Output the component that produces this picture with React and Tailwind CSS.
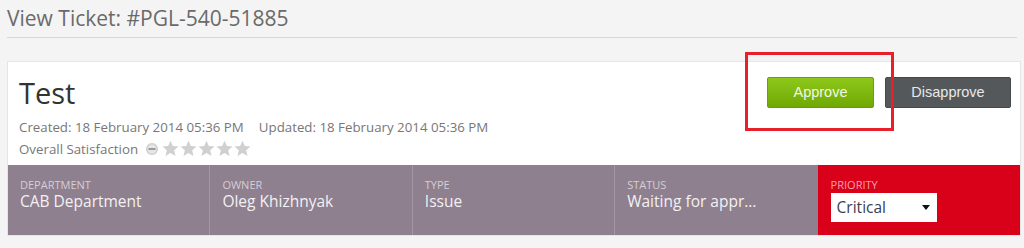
import React from 'react';

const Star = () => (
    <svg width="19" height="18" viewBox="0 0 24 24" className="-mr-[1px]">
        <path d="M12 1l3.1 7 7.6.7-5.8 5 1.8 7.5L12 17.3l-6.7 3.9 1.8-7.5-5.8-5 7.6-.7z" fill="#d0d0d0" />
    </svg>
);

const Cell = ({ label, value, last }) => (
    <div className={`px-[12px] pt-[13px] ${last ? '' : 'border-r border-[#a396a3]'}`}>
        <div className="text-[11px] leading-[13px] uppercase text-[#d6ced6]">{label}</div>
        <div className="text-[15.5px] leading-[20px] text-[#f4f0f4] whitespace-nowrap">{value}</div>
    </div>
);

const App = () => {
    return (
        <div className="w-[1024px] h-[248px] bg-[#f4f4f4] overflow-hidden font-['Open_Sans',sans-serif]">
            {/* Header */}
            <div className="px-[7px] pt-[5px]">
                <h1 className="text-[21px] leading-[27px] text-[#6a6a6a]">View Ticket: #PGL-540-51885</h1>
                <div className="mt-[5px] border-t border-[#d8d8d8]" />
            </div>

            {/* Ticket card */}
            <div className="relative ml-[7px] mt-[23px] w-[1014px] bg-white border border-[#e6e6e6]">
                <div className="flex justify-between h-[103px]">
                    <div className="pl-[11px] pt-[13px]">
                        <div className="text-[29px] leading-[36px] text-[#333]">Test</div>
                        <div className="mt-[7px] text-[13.3px] leading-[18px] text-[#777] flex gap-[15px]">
                            <span>Created: 18 February 2014 05:36 PM</span>
                            <span>Updated: 18 February 2014 05:36 PM</span>
                        </div>
                        <div className="mt-[4px] flex items-center text-[13.3px] leading-[18px] text-[#777]">
                            <span>Overall Satisfaction</span>
                            <svg width="14" height="14" viewBox="0 0 14 14" className="ml-[7px] mr-[2px]">
                                <circle cx="7" cy="7" r="6" fill="#cfcfcf" />
                                <circle cx="7" cy="7" r="4.5" fill="#e6e6e6" />
                                <rect x="3.5" y="6" width="7" height="2" fill="#9a9a9a" />
                            </svg>
                            <Star /><Star /><Star /><Star /><Star />
                        </div>
                    </div>
                    <div className="flex gap-[11px] pt-[15px] pr-[9px] font-['Liberation_Sans',sans-serif]">
                        <button className="w-[107px] h-[31px] rounded-[2px] bg-gradient-to-b from-[#8ec81a] to-[#70a803] border border-[#6a9e05] text-[14.5px] text-[#f0f8e0]">
                            Approve
                        </button>
                        <button className="w-[126px] h-[31px] rounded-[2px] bg-[#54585b] border border-[#44484b] text-[14.5px] text-[#e8e8e8]">
                            Disapprove
                        </button>
                    </div>
                </div>

                {/* Info strip */}
                <div className="grid grid-cols-5 h-[70px] bg-[#8e808e]">
                    <Cell label="Department" value="CAB Department" />
                    <Cell label="Owner" value="Oleg Khizhnyak" />
                    <Cell label="Type" value="Issue" />
                    <Cell label="Status" value="Waiting for appr..." last />
                    <div className="bg-[#d9001a] pl-[13px] pt-[13px]">
                        <div className="text-[11px] leading-[13px] uppercase text-[#f7a1aa]">Priority</div>
                        <div className="mt-[2px] w-[106px] h-[29px] bg-white flex items-center justify-between pl-[6px] pr-[7px] text-[15.5px] text-[#3b4050]">
                            <span>Critical</span>
                            <svg width="8" height="5" viewBox="0 0 8 5"><path d="M0 0h8L4 5z" fill="#111" /></svg>
                        </div>
                    </div>
                </div>

                {/* Annotation box */}
                <div className="absolute left-[737px] top-[-10px] w-[149px] h-[79px] border-[3px] border-[#e8202a]" />
            </div>
        </div>
    );
};

export default App;
